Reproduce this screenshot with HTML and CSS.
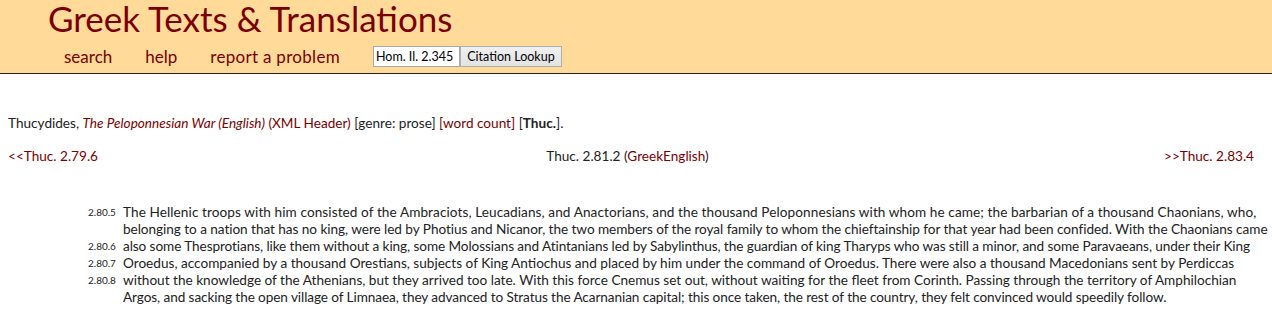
FILE: index.html
```html
<!DOCTYPE html>
<html>
<head>
<meta charset="utf-8" />
<title>Greek Texts &amp; Translations</title>
<link rel="stylesheet" href="styles.css">
</head>
<body>
	<div class="header">
		<h1 class="site-title">Greek Texts &amp; Translations</h1>
		<div class="nav">
			<a href="#">search</a>
			<a href="#">help</a>
			<a class="report" href="#">report a problem</a>
			<form class="lookup">
				<input type="text" value="Hom. Il. 2.345">
				<button type="button">Citation Lookup</button>
			</form>
		</div>
	</div>

	<div class="main">
		<p class="doc-info">Thucydides, <a href="#"><i>The Peloponnesian War (English)</i></a> <a href="#">(XML Header)</a> [genre: prose] <a href="#">[word count]</a> [<b>Thuc.</b>].</p>

		<div class="pager">
			<a href="#">&lt;&lt;Thuc. 2.79.6</a>
			<span class="here">Thuc. 2.81.2 (<a href="#">GreekEnglish</a>)</span>
			<a class="next" href="#">&gt;&gt;Thuc. 2.83.4</a>
		</div>

		<div class="text">
			<span class="sec">2.80.5</span><span class="line wide">The Hellenic troops with him consisted of the Ambraciots, Leucadians, and Anactorians, and the thousand Peloponnesians with whom he came; the barbarian of a thousand Chaonians, who,</span>
			<span class="sec"></span><span class="line tight">belonging to a nation that has no king, were led by Photius and Nicanor, the two members of the royal family to whom the chieftainship for that year had been confided. With the Chaonians came</span>
			<span class="sec">2.80.6</span><span class="line tighter">also some Thesprotians, like them without a king, some Molossians and Atintanians led by Sabylinthus, the guardian of king Tharyps who was still a minor, and some Paravaeans, under their King</span>
			<span class="sec">2.80.7</span><span class="line">Oroedus, accompanied by a thousand Orestians, subjects of King Antiochus and placed by him under the command of Oroedus. There were also a thousand Macedonians sent by Perdiccas</span>
			<span class="sec">2.80.8</span><span class="line">without the knowledge of the Athenians, but they arrived too late. With this force Cnemus set out, without waiting for the fleet from Corinth. Passing through the territory of Amphilochian</span>
			<span class="sec"></span><span class="line tighter">Argos, and sacking the open village of Limnaea, they advanced to Stratus the Acarnanian capital; this once taken, the rest of the country, they felt convinced would speedily follow.</span>
		</div>
	</div>
</body>
</html>
```

FILE: styles.css
```css
body {
	margin: 0;
	font-family: Lato, "Open Sans", sans-serif;
	color: #222;
	background: #fff;
}

a {
	color: #7a0000;
	text-decoration: none;
}

/* Header */
.header {
	background: #ffda99;
	border-bottom: 1px solid #222;
	height: 74px;
	box-sizing: border-box;
	padding-left: 48px;
}
.site-title {
	margin: 0;
	font-size: 35px;
	font-weight: normal;
	line-height: 36px;
	color: #7a0000;
}
.nav {
	display: flex;
	align-items: center;
	padding-left: 16px;
	margin-top: 10px;
	font-size: 17px;
}
.nav a {
	margin-right: 33px;
}
.nav .report {
	letter-spacing: 0.3px;
}
.lookup {
	display: flex;
	margin: 0;
}
.lookup input {
	width: 87px;
	height: 21px;
	box-sizing: border-box;
	border: 1px solid #a9a9a9;
	padding: 0 2px;
	font-family: Lato, sans-serif;
	font-size: 12.5px;
	color: #000;
}
.lookup button {
	width: 102px;
	height: 21px;
	box-sizing: border-box;
	border: 1px solid #adadad;
	background: linear-gradient(#f0f0f0, #e3e3e3);
	font-family: Lato, sans-serif;
	font-size: 12.5px;
	color: #000;
	padding: 0;
}

/* Main */
.main {
	padding: 0 8px;
	font-size: 13.6px;
}
.doc-info {
	margin: 41px 0 0;
	line-height: 17px;
}
.pager {
	display: grid;
	grid-template-columns: 1fr auto 1fr;
	margin-top: 16px;
	padding-right: 10px;
	line-height: 17px;
}
.pager .here {
	margin-right: 7px;
}
.pager .next {
	justify-self: end;
}

.text {
	display: grid;
	grid-template-columns: 35px auto;
	margin-top: 39px;
	padding-left: 80px;
	line-height: 17px;
}
.sec {
	font-size: 10px;
}
.line {
	white-space: nowrap;
}
/* nudge line lengths toward the original wrap */
.line.wide {
	letter-spacing: 0.085px;
}
.line.tight {
	letter-spacing: -0.05px;
}
.line.tighter {
	letter-spacing: -0.085px;
}
```
